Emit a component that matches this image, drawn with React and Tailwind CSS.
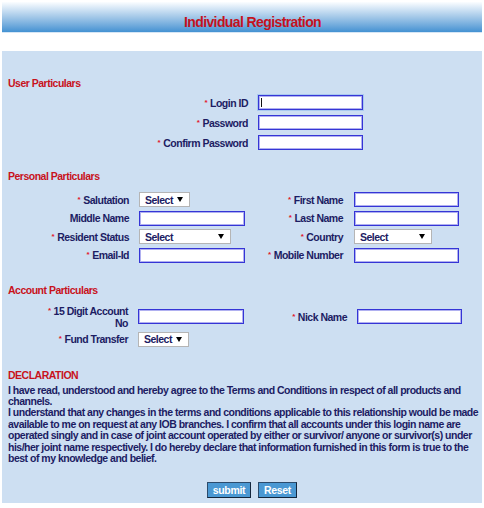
import React from "react";

function Req() {
  return (
    <span className="relative -top-[2px] mr-[3px] text-[8px] leading-none font-bold text-[#e3162b]">*</span>
  );
}

function Label({ req, children, pr = "pr-[10px]" }) {
  return (
    <div
      className={`flex items-center justify-end text-right text-[10.5px] font-bold leading-[12px] tracking-[-0.5px] text-[#1c1c63] ${pr}`}
    >
      <div>
        {req && <Req />}
        {children}
      </div>
    </div>
  );
}

function TextBox({ w = "w-[105px]", focused = false }) {
  return (
    <div className="flex items-center">
      <div
        className={`relative h-[15px] ${w} border border-[#3535d6] bg-white shadow-[inset_0_0_0_1px_#b0b0f0] ${
          focused ? "outline outline-1 outline-[#a9c9ef]" : ""
        }`}
      >
        {focused && <span className="absolute left-[2px] top-[2px] h-[9px] w-[1px] bg-[#111]" />}
      </div>
    </div>
  );
}

function SelectBox({ w = "w-[51px]" }) {
  return (
    <div className="flex items-center">
      <div
        className={`flex h-[15px] ${w} items-center justify-between border border-[#b5b5b5] bg-white pl-[5px] pr-[6px]`}
      >
        <span className="text-[10.5px] font-bold leading-[12px] tracking-[-0.5px] text-[#1c1c63]">Select</span>
        <span className="h-0 w-0 border-l-[3px] border-r-[3px] border-t-[5px] border-l-transparent border-r-transparent border-t-black" />
      </div>
    </div>
  );
}

function Heading({ children, className = "" }) {
  return (
    <div className={`pl-[6px] text-[10.5px] font-bold leading-[12px] tracking-[-0.5px] text-[#c8121c] ${className}`}>
      {children}
    </div>
  );
}

export default function App() {
  return (
    <div className="h-[508px] w-[484px] overflow-hidden bg-white px-[2px] pt-[2px] font-['Liberation_Sans',Arial,sans-serif]">
      <div className="flex h-[31px] justify-center border-b border-[#d6e6f5] bg-linear-to-b from-[#fbfdff] via-[#a3c8e8] to-[#4392d2] pl-[21px] pt-[12px]">
        <div className="text-[14px] font-bold leading-[16px] tracking-[-0.6px] text-[#c4121d]">Individual Registration</div>
      </div>

      <div className="mt-[18px] h-[452px] bg-[#cddff2] pt-[26px]">
        <Heading>User Particulars</Heading>
        <div className="mt-[6px] grid grid-cols-[256px_auto] gap-y-[5px]">
          <Label req>Login ID</Label>
          <TextBox focused />
          <Label req>Password</Label>
          <TextBox />
          <Label req>Confirm Password</Label>
          <TextBox />
        </div>

        <Heading className="mt-[20px]">Personal Particulars</Heading>
        <div className="mt-[10px] grid grid-cols-[137px_106px_109px_auto] gap-y-[3.5px]">
          <Label req>Salutation</Label>
          <SelectBox w="w-[51px]" />
          <Label req pr="pr-[11px]">First Name</Label>
          <TextBox />

          <Label>Middle Name</Label>
          <TextBox w="w-[106px]" />
          <Label req pr="pr-[11px]">Last Name</Label>
          <TextBox />

          <Label req>Resident Status</Label>
          <SelectBox w="w-[92px]" />
          <Label req pr="pr-[11px]">Country</Label>
          <SelectBox w="w-[78px]" />

          <Label req>Email-Id</Label>
          <TextBox w="w-[106px]" />
          <Label req pr="pr-[11px]">Mobile Number</Label>
          <TextBox />
        </div>

        <Heading className="mt-[21px]">Account Particulars</Heading>
        <div className="mt-[9px] grid grid-cols-[136px_106px_113px_auto] gap-y-[3px]">
          <Label req>
            15 Digit Account
            <br />
            No
          </Label>
          <TextBox w="w-[106px]" />
          <Label req>Nick Name</Label>
          <TextBox />

          <Label req>Fund Transfer</Label>
          <SelectBox w="w-[51px]" />
          <div />
          <div />
        </div>

        <Heading className="mt-[22px]">DECLARATION</Heading>
        <div className="mt-[4px] pl-[6px] text-[10.5px] font-bold leading-[11.4px] tracking-[-0.5px] text-[#1c1c63]">
          <div className="whitespace-nowrap">
            I have read, understood and hereby agree to the Terms and Conditions in respect of all products and
          </div>
          <div className="whitespace-nowrap">channels.</div>
          <div className="whitespace-nowrap">
            I understand that any changes in the terms and conditions applicable to this relationship would be made
          </div>
          <div className="whitespace-nowrap">
            available to me on request at any IOB branches. I confirm that all accounts under this login name are
          </div>
          <div className="whitespace-nowrap">
            operated singly and in case of joint account operated by either or survivor/ anyone or survivor(s) under
          </div>
          <div className="whitespace-nowrap">
            his/her joint name respectively. I do hereby declare that information furnished in this form is true to the
          </div>
          <div className="whitespace-nowrap">best of my knowledge and belief.</div>
        </div>

        <div className="mt-[18px] flex justify-center gap-[7px] pl-[20px]">
          <button className="h-[16px] w-[44px] border border-[#2c4b6c] border-b-[#14263c] border-r-[#14263c] bg-[#4a98d3] text-[10.5px] font-bold leading-[12px] tracking-[-0.3px] text-white">
            submit
          </button>
          <button className="h-[16px] w-[39px] border border-[#2c4b6c] border-b-[#14263c] border-r-[#14263c] bg-[#4a98d3] text-[10.5px] font-bold leading-[12px] tracking-[-0.3px] text-white">
            Reset
          </button>
        </div>
      </div>
    </div>
  );
}
